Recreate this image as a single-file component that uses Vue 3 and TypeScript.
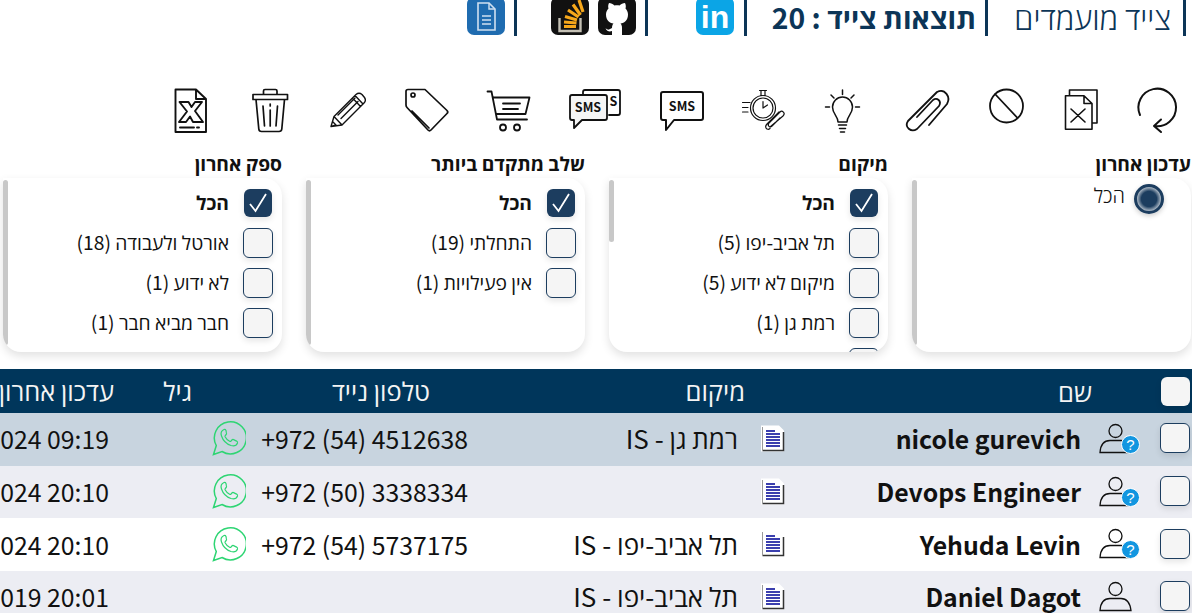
<template>
  <div class="page" dir="rtl">
    <header class="topbar">
      <div class="top-sec sec-title">צייד מועמדים</div>
      <div class="top-sec sec-results">תוצאות צייד : 20</div>
      <div class="top-sec sec-linkedin">
        <svg class="brand" viewBox="0 0 38 38">
          <rect width="38" height="38" rx="7" fill="#0ba5e6" />
          <text x="19" y="31" text-anchor="middle" class="in-text">in</text>
        </svg>
      </div>
      <div class="top-sec sec-social">
        <svg class="brand" viewBox="0 0 38 38">
          <rect width="38" height="38" rx="7" fill="#111" />
          <path
            fill="#fff"
            d="M11 6C13 6 15 7 16.500 8.500C18 8 20 8 21.500 8.500C23 7 25 6 27 6C28 8 28 10 27.500 11.500C29 13 30 15 30 17.500C30 23 26.500 26 22.500 26.500C23.500 27.500 24 29 24 31V38H14V34C11 35 9 34 7.500 31.500C9 32 10 33 11 32.500L14 31C14 29 14.500 27.500 15.500 26.500C11.500 26 8 23 8 17.500C8 15 9 13 10.500 11.500C10 10 10 8 11 6Z"
          />
        </svg>
        <svg class="brand" viewBox="0 0 38 38">
          <rect width="38" height="38" rx="7" fill="#111" />
          <path d="M8.500 21v13h21V21" fill="none" stroke="#c4c0b4" stroke-width="2.400" />
          <path d="M13 29.500h12M13 25l12.500 1M14 19.500l12 3.500M17 13l10.500 7M22 7.500l7.500 10.500M28 3l4 12" fill="none" stroke="#f7a81b" stroke-width="3.200" />
        </svg>
      </div>
      <div class="top-sec sec-doc">
        <svg class="brand" viewBox="0 0 38 38">
          <rect width="38" height="38" rx="7" fill="#1f6cb0" />
          <path d="M11 6h11l6 6v21H11z" fill="none" stroke="#cfe0f0" stroke-width="1.600" />
          <path d="M22 6v6h6M15 19h9M15 23h9M15 27h9" fill="none" stroke="#cfe0f0" stroke-width="1.400" />
        </svg>
      </div>
    </header>

    <div class="toolbar">
      <svg
        v-for="icon in tools"
        :key="icon.name"
        :width="icon.w"
        height="50"
        :viewBox="`0 0 ${icon.w} 50`"
        class="tool"
        :style="{ marginLeft: icon.gap + 'px' }"
      >
        <path v-if="icon.fill" :d="icon.fill" fill="#f5f5f5" stroke="none" />
        <path :d="icon.d" fill="none" stroke="#111" :stroke-width="icon.sw" stroke-linejoin="round" stroke-linecap="round" />
        <text v-for="t in icon.texts || []" :key="t.x" :x="t.x" :y="t.y" class="sms-text" text-anchor="middle">{{ t.s }}</text>
      </svg>
    </div>

    <section class="filters">
      <div v-for="f in filters" :key="f.title" class="filter">
        <div class="filter-title">{{ f.title }}</div>
        <div class="card">
          <span class="thumb" :class="{ short: f.short }"></span>
          <label v-if="f.radio" class="radio-row">
            <span class="radio"></span>
            <span class="radio-label">הכל</span>
          </label>
          <template v-else>
            <div class="opt all">
              <span class="box checked">
                <svg viewBox="0 0 28 28" width="28" height="28"><path d="M6 15l5.500 7L22 5" fill="none" stroke="#fff" stroke-width="1.800" /></svg>
              </span>
              <span class="opt-label">הכל</span>
            </div>
            <div v-for="o in f.options" :key="o" class="opt">
              <span class="box"></span>
              <span class="opt-label">{{ o }}</span>
            </div>
          </template>
        </div>
      </div>
    </section>

    <section class="table">
      <div class="thead">
        <div class="th th-name">
          <span class="box head-box"></span>
          <span>שם</span>
        </div>
        <div class="th th-loc">מיקום</div>
        <div class="th th-phone">טלפון נייד</div>
        <div class="th th-age">גיל</div>
        <div class="th th-date">עדכון אחרון</div>
      </div>
      <div v-for="r in rows" :key="r.name" class="row" :class="r.tone">
        <div class="td td-name">
          <span class="box row-box"></span>
          <svg class="person" viewBox="0 0 41 31" width="41" height="31">
            <circle cx="16.500" cy="8" r="6.500" fill="none" stroke="#111" stroke-width="1.300" />
            <path d="M1 29.500C1.500 22 5 17.500 11 17.500h11c5 0 9 4 10 12z" fill="none" stroke="#111" stroke-width="1.300" />
            <template v-if="r.unknown">
              <circle cx="31.500" cy="21.500" r="9" fill="#1296e0" stroke="#fff" stroke-width="1" />
              <text x="31.500" y="27" text-anchor="middle" class="q">?</text>
            </template>
          </svg>
          <span class="name">{{ r.name }}</span>
        </div>
        <div class="td td-loc">
          <svg class="doc" viewBox="0 0 25 27" width="25" height="27">
            <path d="M1 0.500h18l5 5v21H1z" fill="#fff" />
            <path d="M2.500 25.500h21V7" fill="none" stroke="#333" stroke-width="1.500" />
            <path d="M2.500 25V2" stroke="#999" stroke-width="1" />
            <path d="M6 6h9M6 9h14M6 12h14M6 15h14M6 18h14M6 21h14" stroke="#3b3fae" stroke-width="1.800" />
          </svg>
          <span class="loc">{{ r.loc }}</span>
        </div>
        <div class="td td-phone">
          <template v-if="r.phone">
            <bdi dir="ltr" class="phone">{{ r.phone }}</bdi>
            <svg class="wa" viewBox="0 0 34 36" width="34" height="36">
              <path d="M1.500 34.500l2.800-9A16 16 0 1 1 10 31.500z" fill="none" stroke="#2ed573" stroke-width="1.500" />
              <path d="M12 9.500c-2.500 1-3.500 3.500-2.500 6.500 1.500 4.500 5 8 9.500 9.500 3 .9 5.500 0 6.500-2.500.3-.9-.2-1.500-.9-1.900l-3-1.500c-.7-.3-1.200-.2-1.700.4l-.9 1.100c-.4.4-.8.5-1.400.2-2-1-3.500-2.500-4.500-4.500-.2-.5-.2-.9.200-1.300l.9-1c.4-.5.5-1 .2-1.600L14 10.400c-.4-.8-1.100-1.200-2-.9z" fill="none" stroke="#2ed573" stroke-width="1.200" />
            </svg>
          </template>
        </div>
        <div class="td td-age"></div>
        <div class="td td-date"><bdi dir="ltr">{{ r.date }}</bdi></div>
      </div>
    </section>
  </div>
</template>

<script setup lang="ts">
interface Tool {
  name: string
  w: number
  gap: number
  d: string
  sw: number
  fill?: string
  texts?: { x: number; y: number; s: string }[]
}

interface Filter {
  title: string
  radio?: boolean
  short?: boolean
  options: string[]
}

const tools: Tool[] = [
  { name: 'refresh', w: 40, gap: 40, sw: 2, d: 'M2 30A18.800 18.800 0 1 1 16 41M23 34.500L16 41L23 47' },
  { name: 'xfile', w: 34, gap: 39, sw: 1.600, d: 'M1.500 10.700H20L28 18.500V44.300H1.500ZM20 10.700V18.500H28M5.500 10.700V5H33V38H28M7 24L21 37M21 24L7 37' },
  { name: 'block', w: 37, gap: 38, sw: 1.800, d: 'M35 21A16.500 16.500 0 1 1 2 21A16.500 16.500 0 1 1 35 21ZM7 9L29.500 33' },
  { name: 'clip', w: 45, gap: 44, sw: 1.800, d: 'M24 40L42 19C46 12 40 3 32 7L3 36C-1 42 6 48 12 44L34 21C37 16 32 12 28 15L12 32' },
  { name: 'idea', w: 36, gap: 37, sw: 1.500, d: 'M13 37C13 31 7.500 29 7.500 22A10 10 0 1 1 27.500 22C27.500 29 22 31 22 37ZM13.500 40H21.500M14.500 43.500H20.500M15.500 47H19.500M17.500 5V9.500M6 10L9 13M29 10L26 13M0.500 22H4.500M30.500 22H34.500' },
  { name: 'timer', w: 46, gap: 38, sw: 1.200, d: 'M33.500 23A12.500 12.500 0 1 1 8.500 23A12.500 12.500 0 1 1 33.500 23ZM31 23A10 10 0 1 1 11 23A10 10 0 1 1 31 23ZM17.500 5.500H24.500M19 5.500V10.500M23 5.500V10.500M21 23V16.500M21 23L25.500 20M0.500 17.500H8M0.500 22.500H6M0.500 27H6M28 42L41 31C44 28 40 25 38 27L27 38C25 41 28 43 30 41L38 33M28 43.500C25 46 22 42 25 39L37 27' },
  { name: 'sms', w: 44, gap: 37, sw: 2, d: 'M3 7H41Q43 7 43 9V33Q43 35 41 35H14L6 45V35H3Q1 35 1 33V9Q1 7 3 7Z', texts: [{ x: 22, y: 25.500, s: 'SMS' }] },
  { name: 'sms2', w: 54, gap: 38, sw: 1.800, d: 'M14 10V7Q14 5 16 5H49Q51 5 51 7V28Q51 30 49 30H40M3 10H36Q38 10 38 12V33Q38 35 36 35H13L5 43V35H3Q1 35 1 33V12Q1 10 3 10Z', fill: 'M3 10H36Q38 10 38 12V33Q38 35 36 35H13L5 43V35H3Q1 35 1 33V12Q1 10 3 10Z', texts: [{ x: 19, y: 27, s: 'SMS' }, { x: 44.500, y: 21, s: 'S' }] },
  { name: 'cart', w: 44, gap: 38, sw: 1.800, d: 'M0.500 6.500H4.500L10 34.500H40M6.500 12.500H42.500L38.500 29H9.500M16 18.500H33M16 24H31M19 42.500A3 3 0 1 1 13 42.500A3 3 0 1 1 19 42.500ZM33 42.500A3 3 0 1 1 27 42.500A3 3 0 1 1 33 42.500Z' },
  { name: 'tag', w: 44, gap: 38, sw: 1.700, d: 'M3 4.500H20L42 25.500Q43.500 27 42 28.500L26 45Q24.500 46.500 23 45L2 22.500Q1 21.500 1 20V6.500Q1 4.500 3 4.500ZM10 10A2 2 0 1 1 6 10A2 2 0 1 1 10 10ZM7 26L24 43' },
  { name: 'pencil', w: 37, gap: 41, sw: 1.400, d: 'M1 41.500L4 31.500L26 9.500Q29 7 32 9.500L34.500 12.500Q36.500 15.500 34 18L12 40ZM4 31.500L12 40M25 10.500L33 19M22.500 13L30.500 21.500M8 30L25 13M11 33.500L28 16.500M1 41.500L2.500 36.500L6 40Z' },
  { name: 'trash', w: 37, gap: 45, sw: 1.700, d: 'M1 9.500H35.500V14.500H1ZM11.500 9V6Q11.500 4.500 13 4.500H23.500Q25 4.500 25 6V9M4 14.500L6.800 44Q7 46.500 9.500 46.500H27Q29.500 46.500 29.800 44L32.500 14.500M11 21L12.500 41M18.200 25V41M18.200 19V21M25.500 21L24 41' },
  { name: 'excel', w: 33, gap: 0, sw: 1.900, d: 'M1.500 4.500H22L32 14V47H1.500ZM22 4.500V14H32M5.500 17H14.500L17.500 22L21 17H28L21 26L29 37H19L16 31.500L12 37H5L13 26.500ZM6 42.500H20M23 42.500H25' }
]

const filters: Filter[] = [
  { title: 'עדכון אחרון', radio: true, options: [] },
  { title: 'מיקום', short: true, options: ['תל אביב-יפו (5)', 'מיקום לא ידוע (5)', 'רמת גן (1)', 'חיפה (1)'] },
  { title: 'שלב מתקדם ביותר', options: ['התחלתי (19)', 'אין פעילויות (1)'] },
  { title: 'ספק אחרון', options: ['אורטל ולעבודה (18)', 'לא ידוע (1)', 'חבר מביא חבר (1)'] }
]

const rows = [
  { name: 'nicole gurevich', loc: 'רמת גן - IS', phone: '+972 (54) 4512638', date: '11/06/2024 09:19', unknown: true, tone: 'selected' },
  { name: 'Devops Engineer', loc: '', phone: '+972 (50) 3338334', date: '10/06/2024 20:10', unknown: true, tone: 'alt' },
  { name: 'Yehuda Levin', loc: 'תל אביב-יפו - IS', phone: '+972 (54) 5737175', date: '10/06/2024 20:10', unknown: true, tone: 'plain' },
  { name: 'Daniel Dagot', loc: 'תל אביב-יפו - IS', phone: '', date: '15/03/2019 20:01', unknown: false, tone: 'alt' }
]
</script>

<style>
html,
body {
  margin: 0;
  height: 100%;
  overflow: hidden;
  background: #fff;
}
</style>

<style scoped>
.page {
  width: 1192px;
  height: 613px;
  overflow: hidden;
  font-family: "Noto Sans CJK SC", "Open Sans", "Liberation Sans", sans-serif;
  color: #111;
}

.topbar {
  display: flex;
  height: 36px;
  overflow: hidden;
  padding-right: 6px;
  color: #0c3557;
}

.top-sec {
  display: flex;
  height: 36px;
  box-sizing: border-box;
  border-right: 3px solid #0c3557;
  line-height: 34px;
  gap: 9px;
  align-items: flex-start;
}

.sec-title {
  width: 198px;
  padding-right: 12px;
  font-size: 31px;
  font-weight: 300;
  white-space: nowrap;
}

.sec-results {
  width: 241px;
  padding-right: 9px;
  font-size: 28.300px;
  font-weight: 700;
  white-space: nowrap;
}

.sec-linkedin {
  width: 99px;
  padding-right: 10px;
}

.sec-social {
  width: 131px;
  padding-right: 9px;
}

.sec-doc {
  padding-right: 9px;
}

.brand {
  width: 38px;
  height: 38px;
  margin-top: -3px;
  flex: none;
}

.in-text {
  font-family: "Liberation Sans", sans-serif;
  font-size: 32px;
  font-weight: 700;
  fill: #fff;
}

.toolbar {
  display: flex;
  margin-top: 49px;
  padding-right: 14px;
  height: 50px;
}

.tool {
  flex: none;
  overflow: visible;
}

.sms-text {
  font-family: "Noto Sans CJK SC", sans-serif;
  font-size: 12.500px;
  font-weight: 700;
  fill: #111;
}

.filters {
  display: grid;
  grid-template-columns: repeat(4, 279px);
  column-gap: 24px;
  margin-top: 18px;
  padding-right: 1px;
}

.filter-title {
  height: 25px;
  line-height: 20px;
  font-size: 19.250px;
  font-weight: 700;
  text-align: right;
}

.card {
  position: relative;
  height: 174px;
  box-sizing: border-box;
  padding: 10px 9px 0 0;
  overflow: hidden;
  border-radius: 0 18px 18px 18px;
  background: #fff;
  box-shadow: 0 4px 10px rgba(0, 0, 0, 0.12);
}

.thumb {
  position: absolute;
  left: 0;
  top: 2px;
  bottom: 7px;
  width: 5px;
  border-radius: 3px;
  background: #c8c8c8;
}

.thumb.short {
  bottom: auto;
  height: 62px;
}

.opt {
  display: flex;
  align-items: center;
  gap: 14px;
  height: 40px;
}

.opt.all {
  height: 30px;
  margin-bottom: 5px;
  font-weight: 700;
}

.opt-label {
  font-size: 19.250px;
  line-height: 24px;
  padding-bottom: 3px;
}

.box {
  display: block;
  flex: none;
  width: 30px;
  height: 30px;
  box-sizing: border-box;
  border: 1.500px solid #1c3d5f;
  border-radius: 6px;
  background: #f5f5f5;
  box-shadow: 0 3px 6px rgba(0, 0, 0, 0.1);
}

.box.checked {
  width: 28px;
  height: 28px;
  margin: 0 1px;
  background: #1c3d5f;
  border: 0;
}

.box.checked svg {
  display: block;
}

.radio-row {
  display: flex;
  align-items: flex-start;
  gap: 9px;
  margin: -4px 18px 0 0;
}

.radio {
  width: 30px;
  height: 30px;
  flex: none;
  box-sizing: border-box;
  border-radius: 50%;
  border: 3px solid #1c3d5f;
  background: radial-gradient(circle, #1c3d5f 0 45%, #fff 85%);
  box-shadow: 0 2px 5px rgba(0, 0, 0, 0.2);
}

.radio-label {
  font-size: 20px;
  font-weight: 300;
  line-height: 22px;
}

.table {
  margin-top: 17px;
  width: 1350px;
}

.thead,
.row {
  display: grid;
  grid-template-columns: 402px 300px 290px 75px 283px;
}

.thead {
  height: 44px;
  background: #00365b;
  color: #f4f4f4;
  font-size: 25.500px;
  line-height: 42px;
  font-weight: 400;
  white-space: nowrap;
}

.th-name {
  display: flex;
  align-items: center;
  gap: 69px;
  padding-right: 2px;
}

.head-box {
  border: 0;
  width: 29px;
  height: 29px;
}

.th-loc {
  padding-right: 45px;
}

.th-phone {
  padding-right: 60px;
}

.th-age {
  padding-right: 8px;
}

.th-date {
  padding-right: 11px;
}

.row {
  height: 52.700px;
  font-size: 24.800px;
}

.row.selected {
  background: #c8d4df;
}

.row.alt {
  background: #ecedf3;
}

.row.plain {
  background: #fff;
}

.td {
  display: flex;
  align-items: center;
  white-space: nowrap;
  padding-bottom: 2px;
  box-sizing: border-box;
}

.td-name {
  padding-right: 2px;
}

.row-box {
  margin-left: 20px;
}

.person {
  flex: none;
  margin-left: 18px;
}

.name {
  font-weight: 700;
}

.q {
  font-family: "Liberation Sans", sans-serif;
  font-size: 15px;
  fill: #fff;
}

.td-loc {
  padding-right: 5px;
  gap: 22px;
}

.doc {
  flex: none;
}

.loc {
  font-size: 26px;
}

.td-phone {
  padding-right: 22px;
  gap: 15px;
}

.td-date {
  padding-right: 16px;
}
</style>
